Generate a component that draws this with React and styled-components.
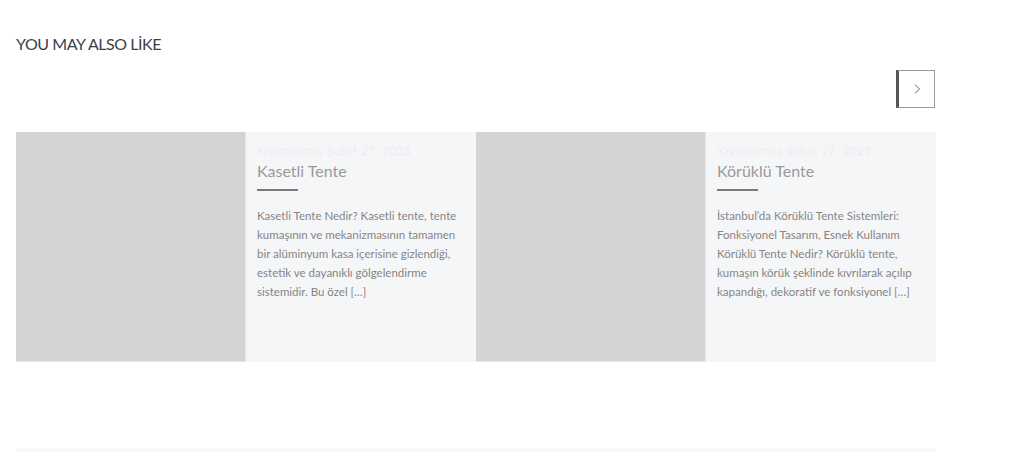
import React from "react";
import styled, { createGlobalStyle } from "styled-components";

const Global = createGlobalStyle`
  html, body { margin: 0; padding: 0; background: #fff; }
  body { font-family: "Source Sans Pro", "Lato", "Noto Sans", sans-serif; }
`;

const Page = styled.div`
  width: 920px;
  padding: 33px 0 0 16px;
`;

const Heading = styled.h3`
  margin: 0;
  font-size: 16px;
  font-weight: 400;
  color: #3a3f47;
  line-height: 22px;
  letter-spacing: -0.45px;
`;

const Nav = styled.div`
  display: flex;
  justify-content: flex-end;
  margin-top: 15px;
`;

const NavButton = styled.button`
  width: 39px;
  height: 38px;
  box-sizing: border-box;
  border: 1px solid #9a9a9a;
  border-left: 3px solid #555;
  background: #fff;
  display: flex;
  align-items: center;
  justify-content: center;
  padding: 0;
  margin-right: 1px;
`;

const Cards = styled.div`
  display: grid;
  grid-template-columns: 1fr 1fr;
  margin-top: 24px;
`;

const Card = styled.div`
  display: grid;
  grid-template-columns: 230px 1fr;
  height: 230px;
  background: #f5f6f8;
`;

const Thumb = styled.div`
  background: #d4d4d4;
  border-bottom: 1px solid #e6e6e6;
  border-right: 1px solid #e6e6e6;
`;

const Body = styled.div`
  padding: 12px 12px 0 11px;
`;

const Date = styled.div`
  font-size: 11px;
  font-weight: 300;
  letter-spacing: 0.8px;
  color: #e6e7ea;
  line-height: 14px;
`;

const Title = styled.div`
  font-size: 16px;
  color: #9a9a9a;
  margin-top: 2px;
  line-height: 22px;
`;

const Rule = styled.div`
  width: 41px;
  height: 2px;
  background: #7a7a7a;
  margin-top: 7px;
`;

const Text = styled.p`
  margin: 15px 0 0;
  font-size: 11.5px;
  line-height: 19px;
  color: #858585;
`;

const Footer = styled.div`
  margin-top: 86px;
  height: 6px;
  background: #f6f7f9;
`;

const items = [
  {
    title: "Kasetli Tente",
    text:
      "Kasetli Tente Nedir? Kasetli tente, tente kumaşının ve mekanizmasının tamamen bir alüminyum kasa içerisine gizlendiği, estetik ve dayanıklı gölgelendirme sistemidir. Bu özel […]",
  },
  {
    title: "Körüklü Tente",
    text:
      "İstanbul’da Körüklü Tente Sistemleri: Fonksiyonel Tasarım, Esnek Kullanım Körüklü Tente Nedir? Körüklü tente, kumaşın körük şeklinde kıvrılarak açılıp kapandığı, dekoratif ve fonksiyonel […]",
  },
];

export default function App() {
  return (
    <>
      <Global />
      <Page>
        <Heading>YOU MAY ALSO LİKE</Heading>
        <Nav>
          <NavButton aria-label="next">
            <svg width="8" height="12" viewBox="0 0 8 12">
              <path d="M2 1.5 L6.5 6 L2 10.5" fill="none" stroke="#5f6f80" strokeWidth="1" />
            </svg>
          </NavButton>
        </Nav>
        <Cards>
          {items.map((it) => (
            <Card key={it.title}>
              <Thumb />
              <Body>
                <Date>Yayımlanmış Şubat 27, 2025</Date>
                <Title>{it.title}</Title>
                <Rule />
                <Text>{it.text}</Text>
              </Body>
            </Card>
          ))}
        </Cards>
        <Footer />
      </Page>
    </>
  );
}
